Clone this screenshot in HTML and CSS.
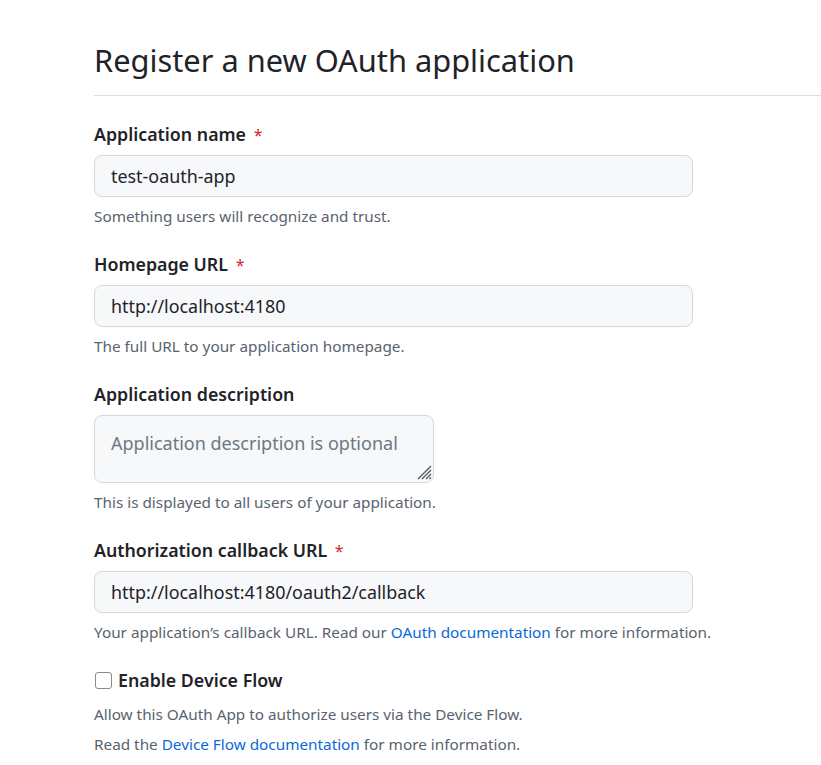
FILE: index.html
```html
<!DOCTYPE html>
<html lang="en">
<head>
<meta charset="utf-8">
<title>Register a new OAuth application</title>
<link rel="stylesheet" href="styles.css">
</head>
<body>
<main class="page">
  <h2 class="subhead">Register a new OAuth application</h2>
  <form class="form">
    <div class="group">
      <label class="label" for="name">Application name <span class="req">*</span></label>
      <input class="input" id="name" type="text" value="test-oauth-app">
      <p class="note">Something users will recognize and trust.</p>
    </div>
    <div class="group">
      <label class="label" for="home">Homepage URL <span class="req">*</span></label>
      <input class="input" id="home" type="text" value="http://localhost:4180">
      <p class="note">The full URL to your application homepage.</p>
    </div>
    <div class="group">
      <label class="label" for="desc">Application description</label>
      <div class="ta-wrap">
        <textarea class="textarea" id="desc" placeholder="Application description is optional"></textarea>
        <svg class="grip" width="16" height="16" viewBox="0 0 16 16" aria-hidden="true">
          <path d="M15 2 L2 15 M15 6 L6 15 M15 10 L10 15 M15 13.5 L13.5 15" stroke="#4d5560" stroke-width="1.3" fill="none"/>
        </svg>
      </div>
      <p class="note">This is displayed to all users of your application.</p>
    </div>
    <div class="group">
      <label class="label" for="cb">Authorization callback URL <span class="req">*</span></label>
      <input class="input" id="cb" type="text" value="http://localhost:4180/oauth2/callback">
      <p class="note">Your application’s callback URL. Read our <a class="link" href="#">OAuth documentation</a> for more information.</p>
    </div>
    <div class="check-group">
      <label class="check-row"><span class="checkbox"></span><span class="check-label">Enable Device Flow</span></label>
      <p class="note note-first">Allow this OAuth App to authorize users via the Device Flow.</p>
      <p class="note">Read the <a class="link" href="#">Device Flow documentation</a> for more information.</p>
    </div>
  </form>
</main>
</body>
</html>
```

FILE: styles.css
```css
* { box-sizing: border-box; }
html, body { margin: 0; padding: 0; background: #ffffff; }
body {
  font-family: "Noto Sans", "Open Sans", "Liberation Sans", sans-serif;
  color: #1f2328;
}
.page {
  padding: 38px 0 0 94px;
}
.subhead {
  margin: 0;
  padding-bottom: 12px;
  border-bottom: 1px solid #d8dee4;
  font-size: 30.8px;
  font-weight: 400;
  line-height: 45px;
}
.form { margin-top: 25px; }
.group { margin-bottom: 24px; }
.label {
  display: block;
  height: 26px;
  font-size: 17.8px;
  font-weight: 600;
  line-height: 26px;
  margin-bottom: 8px;
}
.req {
  color: #d1242f;
  font-weight: 400;
  margin-left: 3px;
  font-size: 16px;
  line-height: 0;
}
.input {
  display: block;
  width: 599px;
  height: 42px;
  padding: 0 16px;
  font: inherit;
  font-size: 17.9px;
  color: #1f2328;
  background: #f6f8fa;
  border: 1px solid #d1d9e0;
  border-radius: 8px;
  outline: none;
}
.ta-wrap {
  position: relative;
  width: 340px;
  height: 68px;
}
.textarea {
  display: block;
  width: 340px;
  height: 68px;
  padding: 14px 16px;
  font: inherit;
  font-size: 18px;
  line-height: 26px;
  color: #1f2328;
  background: #f6f8fa;
  border: 1px solid #d1d9e0;
  border-radius: 8px;
  resize: none;
  outline: none;
}
.textarea::placeholder { color: #6e7781; }
.grip {
  position: absolute;
  right: 2px;
  bottom: 3px;
}
.note {
  margin: 8px 0 0;
  height: 22px;
  font-size: 15.3px;
  line-height: 22px;
  color: #59636e;
}
.link { color: #0969da; text-decoration: none; }
.check-row {
  display: flex;
  align-items: center;
  gap: 6px;
  height: 26px;
  padding-left: 1px;
}
.checkbox {
  width: 17px;
  height: 17px;
  border: 1.5px solid #818b98;
  border-radius: 3px;
  background: #fff;
}
.check-label {
  font-size: 17.8px;
  font-weight: 600;
  line-height: 26px;
}
.note-first { margin-top: 10px; }
```
